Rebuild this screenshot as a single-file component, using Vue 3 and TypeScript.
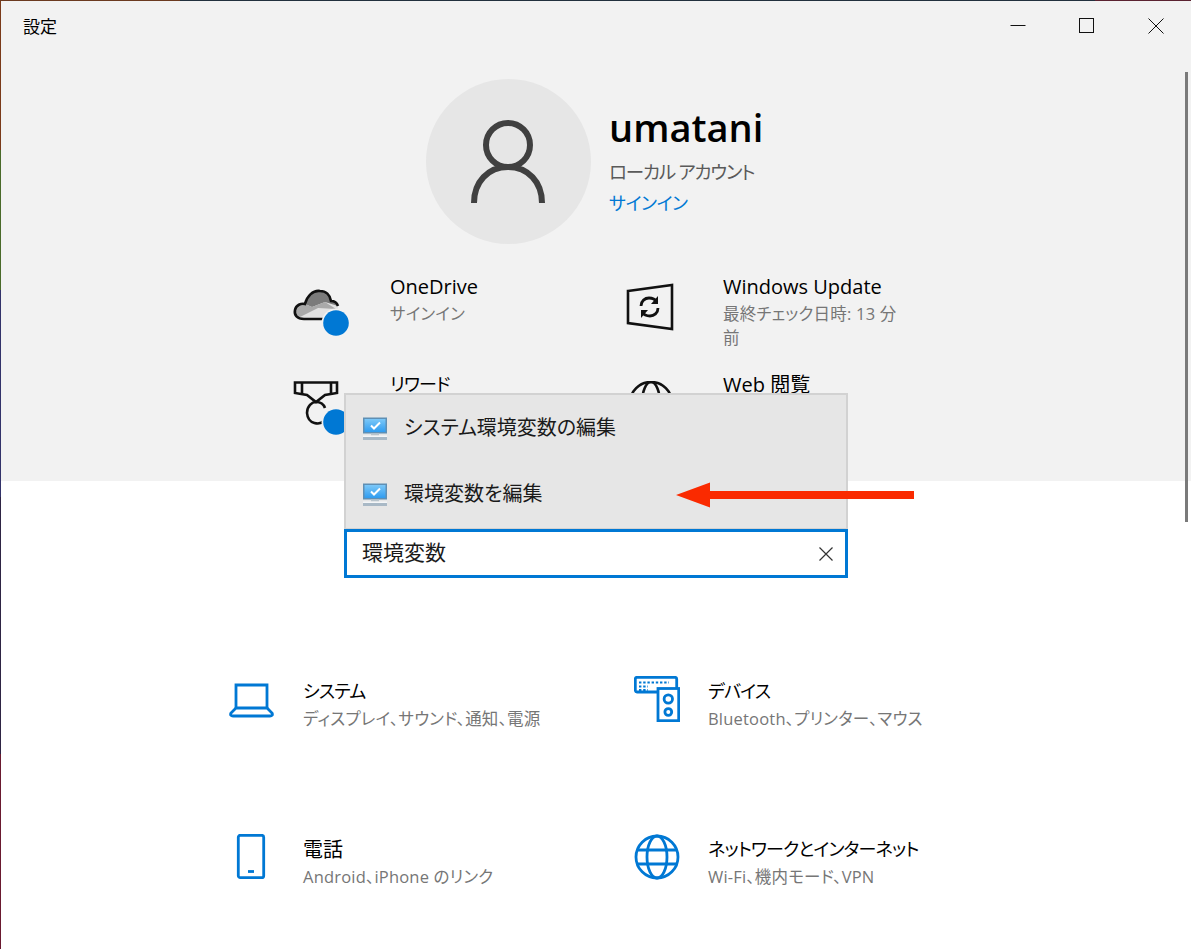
<script setup lang="ts">
const suggestions = ['システム環境変数の編集', '環境変数を編集']

const quickLinks = [
  { id: 'onedrive', title: 'OneDrive', sub: 'サインイン', kana: false },
  { id: 'update', title: 'Windows Update', sub: '最終チェック日時: 13 分前', kana: false },
  { id: 'rewards', title: 'リワード', sub: '', kana: true },
  { id: 'web', title: 'Web 閲覧', sub: '', kana: false },
]

const categories = [
  { id: 'system', title: 'システム', sub: 'ディスプレイ、サウンド、通知、電源', kana: true },
  { id: 'devices', title: 'デバイス', sub: 'Bluetooth、プリンター、マウス', kana: true },
  { id: 'phone', title: '電話', sub: 'Android、iPhone のリンク', kana: false },
  { id: 'network', title: 'ネットワークとインターネット', sub: 'Wi-Fi、機内モード、VPN', kana: true },
]
</script>

<template>
  <div class="window">
    <div class="app">
      <section class="hero">
        <header class="titlebar">
          <span class="app-title">設定</span>
          <div class="controls">
            <svg width="16" height="16" viewBox="0 0 16 16"><path d="M0.5 7.5H15.5" stroke="#111" fill="none" /></svg>
            <svg width="16" height="16" viewBox="0 0 16 16"><rect x="0.5" y="0.5" width="14" height="14" stroke="#111" fill="none" /></svg>
            <svg width="16" height="16" viewBox="0 0 16 16"><path d="M0.5 0.5L15.5 15.5M15.5 0.5L0.5 15.5" stroke="#111" fill="none" /></svg>
          </div>
        </header>

        <div class="profile">
          <div class="avatar">
            <svg width="76" height="86" viewBox="0 0 76 86" fill="none" stroke="#404040" stroke-width="6">
              <circle cx="37" cy="26" r="22" />
              <path d="M3 84C3 63 17 48 37 48S71 63 71 84" />
            </svg>
          </div>
          <div class="profile-text">
            <div class="user-name">umatani</div>
            <div class="account-type">ローカル アカウント</div>
            <div class="sign-in">サインイン</div>
          </div>
        </div>

        <div class="quick-links">
          <div v-for="link in quickLinks" :key="link.id" class="quick-link">
            <svg v-if="link.id === 'onedrive'" class="quick-icon" width="60" height="60" viewBox="0 0 60 60">
              <path d="M12 36C5 36 2 32 3 27C4 22 9 20 13 21C15 13 21 7 28 8C34 8 38 12 39 18C43 18 46 21 46 26L40 36Z" fill="#e2e2e2" />
              <path d="M13 21C15 13 21 7 28 8C34 8 38 12 39 18C43 18 45 20 46 23L33 19L20 24Z" fill="#7b7b7b" />
              <path d="M3 29C4 22 9 20 13 21L20 24L33 19L44 26L26 25L8 34C5 33 3 31 3 29Z" fill="#a9a9a9" />
              <path d="M42 36H12C5 36 2 32 3 27C4 22 9 20 13 21C15 13 21 7 28 8C34 8 38 12 39 18C43 18 45 20 46 23" fill="none" stroke="#111" stroke-width="2.6" />
              <circle cx="44" cy="40" r="14.5" fill="#f2f2f2" />
              <circle cx="44" cy="40" r="12.8" fill="#0078d4" />
            </svg>
            <svg v-else-if="link.id === 'update'" class="quick-icon" width="60" height="60" viewBox="0 0 60 60">
              <path d="M3 8L47 2V46L3 40Z" fill="none" stroke="#111" stroke-width="2.6" />
              <path d="M16 23C16 18 20 15 24 15C27 15 30 16 32 19M33 25C33 30 29 33 25 33C22 33 19 32 17 29" fill="none" stroke="#111" stroke-width="2.8" />
              <path d="M33 13V21H26ZM16 35V27H23Z" fill="#111" />
            </svg>
            <svg v-else-if="link.id === 'rewards'" class="quick-icon" width="60" height="60" viewBox="0 0 60 60">
              <path d="M3 1.500H45V12L33 14L24 21L15 14L3 12Z" fill="none" stroke="#111" stroke-width="2.6" />
              <path d="M10 1.500V13M39 1.500V13" stroke="#111" stroke-width="2.6" />
              <path d="M32 40C28 44 16 44 15 32C15 25 20 21 24 21C29 21 32 24 33 27" fill="none" stroke="#111" stroke-width="2.6" />
              <circle cx="44" cy="41" r="14.5" fill="#f2f2f2" />
              <circle cx="44" cy="41" r="12.8" fill="#0078d4" />
            </svg>
            <svg v-else class="quick-icon" width="60" height="60" viewBox="0 0 60 60" fill="none" stroke="#111" stroke-width="2.6">
              <circle cx="26" cy="22" r="21" />
              <ellipse cx="26" cy="22" rx="9" ry="21" />
            </svg>
            <div class="quick-text">
              <div class="item-title" :class="{ kana: link.kana }">{{ link.title }}</div>
              <div class="item-sub">{{ link.sub }}</div>
            </div>
          </div>
        </div>
      </section>

      <section class="categories">
        <div v-for="cat in categories" :key="cat.id" class="category">
          <svg v-if="cat.id === 'system'" class="cat-icon" width="46" height="46" viewBox="0 0 46 46" fill="none" stroke="#0078d4" stroke-width="2.8">
            <path d="M7 32V9H38V32" />
            <path d="M7 32L2 37C1 39 2 40 4 40H41C43 40 44 39 43 37L38 32Z" />
          </svg>
          <svg v-else-if="cat.id === 'devices'" class="cat-icon" width="46" height="46" viewBox="0 0 46 46" fill="none" stroke="#0078d4" stroke-width="2.8">
            <path d="M24 16H3C2 16 1.300 15.300 1.300 14V3C1.300 2 2 1.300 3 1.300H41C42 1.300 42.700 2 42.700 3V12" />
            <rect x="24" y="12.500" width="20.700" height="32.200" />
            <circle cx="34.300" cy="23" r="4.200" />
            <circle cx="34.300" cy="36" r="3.400" />
            <path d="M5 6.500H35M5 10.500H14M5 14H14" stroke-width="2.200" stroke-dasharray="2.400 1.800" />
          </svg>
          <svg v-else-if="cat.id === 'phone'" class="cat-icon" width="46" height="46" viewBox="0 0 46 46" fill="none" stroke="#0078d4" stroke-width="2.8">
            <rect x="9.300" y="1.300" width="25.400" height="42.400" rx="2" />
            <path d="M19 37.500H25" stroke-width="2.800" />
          </svg>
          <svg v-else class="cat-icon" width="46" height="46" viewBox="0 0 46 46" fill="none" stroke="#0078d4" stroke-width="2.8">
            <circle cx="23" cy="23" r="21" />
            <ellipse cx="23" cy="23" rx="10" ry="21" />
            <path d="M4 16H42M4 30H42" />
          </svg>
          <div class="cat-text">
            <div class="item-title" :class="{ kana: cat.kana }">{{ cat.title }}</div>
            <div class="item-sub">{{ cat.sub }}</div>
          </div>
        </div>
      </section>
    </div>

    <div class="search">
      <ul class="suggestions">
        <li v-for="text in suggestions" :key="text" class="suggestion">
          <svg class="suggestion-icon" width="26" height="24" viewBox="0 0 26 24">
            <defs>
              <linearGradient id="screen" x1="0" y1="0" x2="0" y2="1">
                <stop offset="0" stop-color="#7cc8f8" />
                <stop offset="1" stop-color="#2f9cf0" />
              </linearGradient>
            </defs>
            <rect x="1" y="0.500" width="24" height="16" fill="#5f8fb4" />
            <rect x="2.500" y="2" width="21" height="13" fill="url(#screen)" />
            <path d="M9 8.500L12 11.500L18 5.500" fill="none" stroke="#fff" stroke-width="2" />
            <rect x="9" y="16.500" width="8" height="2" fill="#b8c4cc" />
            <rect x="1" y="18.500" width="24" height="1.500" fill="#f4f6f8" />
            <rect x="1" y="20" width="24" height="3" fill="#a9b9c6" />
          </svg>
          <span>{{ text }}</span>
        </li>
      </ul>
      <div class="search-input">
        <span>環境変数</span>
        <svg width="14" height="14" viewBox="0 0 14 14"><path d="M0.500 0.500L13.500 13.500M13.500 0.500L0.500 13.500" stroke="#333" stroke-width="1.200" fill="none" /></svg>
      </div>
    </div>

    <svg class="arrow" width="240" height="28" viewBox="0 0 240 28">
      <path d="M0 14L34 1.500V10H238V18H34V26.500Z" fill="#fa2a00" />
    </svg>

    <div class="scrollbar"></div>
  </div>
</template>

<style scoped>
.window {
  position: relative;
  width: 1191px;
  height: 949px;
  overflow: hidden;
  box-sizing: border-box;
  padding: 1px 0 0 1px;
  font-family: "Open Sans", "Noto Sans CJK JP", sans-serif;
  font-feature-settings: "palt";
  color: #000;
  background:
    linear-gradient(90deg, #6b3a20 0, #6b3a20 180px, #22303e 180px, #22303e 1095px, #5a2230 1095px) top / 100% 1px no-repeat,
    linear-gradient(180deg, #7a3a1a 0, #7a3a1a 150px, #4a6a2a 150px, #4a6a2a 290px, #33336a 290px, #33336a 497px, #2e2444 497px, #2e2444 754px, #6a1a30 754px);
}

.app {
  height: 948px;
  background: #fff;
}

.hero {
  height: 480px;
  background: #f2f2f2;
}

.titlebar {
  display: flex;
  justify-content: space-between;
  align-items: flex-start;
  height: 78px;
  padding: 16px 27px 0 22px;
  box-sizing: border-box;
}

.app-title {
  font-size: 17px;
  line-height: 20px;
}

.controls {
  display: flex;
  gap: 53px;
  margin-top: 1px;
}

.profile {
  display: flex;
  gap: 18px;
  padding-left: 425px;
}

.avatar {
  display: flex;
  align-items: center;
  justify-content: center;
  width: 165px;
  height: 165px;
  border-radius: 50%;
  background: #e6e6e6;
}

.profile-text {
  padding-top: 23px;
}

.user-name {
  font-size: 38px;
  line-height: 50px;
  font-weight: 600;
}

.account-type {
  margin-top: 6px;
  font-size: 18.5px;
  line-height: 28px;
  letter-spacing: -1.2px;
  color: #5a5a5a;
}

.sign-in {
  margin-top: 4px;
  font-size: 18px;
  line-height: 26px;
  letter-spacing: -0.4px;
  color: #0078d4;
}

.quick-links {
  display: grid;
  grid-template-columns: 333px 274px;
  grid-auto-rows: 98px;
  margin-top: 27px;
  padding-left: 291px;
}

.quick-link {
  display: flex;
  gap: 38px;
}

.quick-icon {
  flex: none;
  margin-top: 12px;
}

.quick-text {
  width: 176px;
}

.item-title {
  padding-top: 2px;
  font-size: 20px;
  line-height: 28px;
  white-space: nowrap;
}

.item-title.kana {
  padding: 1px 0;
  font-size: 18px;
  letter-spacing: -0.8px;
}

.item-sub {
  margin-top: 1px;
  font-size: 16.5px;
  line-height: 24px;
  letter-spacing: 0.2px;
  color: #767676;
}

.categories {
  display: grid;
  grid-template-columns: 405px 300px;
  grid-auto-rows: 158px;
  padding: 195px 0 0 228px;
}

.category {
  display: flex;
  gap: 28px;
}

.cat-icon {
  flex: none;
}

.search {
  position: absolute;
  left: 344px;
  top: 393px;
  width: 504px;
}

.suggestions {
  margin: 0;
  padding: 0;
  list-style: none;
  box-sizing: border-box;
  height: 136px;
  background: #e6e6e6;
  border: 2px solid #d2d2d2;
  border-bottom-width: 1px;
}

.suggestion {
  display: flex;
  align-items: center;
  gap: 16px;
  height: 66px;
  padding-left: 16px;
  font-size: 20px;
  color: #1a1a1a;
}

.suggestion span {
  margin-top: -4px;
}

.suggestion-icon {
  margin-top: 1px;
}

.search-input {
  display: flex;
  align-items: center;
  justify-content: space-between;
  box-sizing: border-box;
  height: 49px;
  padding: 0 12px 0 15px;
  background: #fff;
  border: 3px solid #0078d4;
  font-size: 21px;
  color: #1a1a1a;
}

.search-input span {
  margin-top: -6px;
}

.arrow {
  position: absolute;
  left: 676px;
  top: 481px;
}

.scrollbar {
  position: absolute;
  left: 1185px;
  top: 72px;
  width: 3px;
  height: 450px;
  background: #7a7a7a;
}
</style>
